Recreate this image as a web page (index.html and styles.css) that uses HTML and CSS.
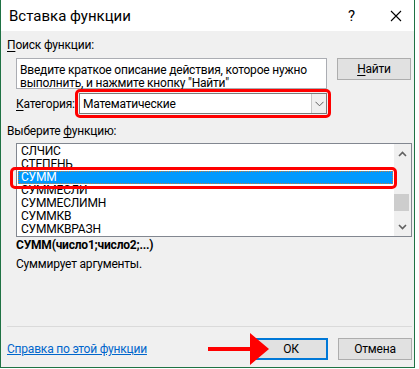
FILE: index.html
```html
<!DOCTYPE html>
<html lang="ru">
<head>
<meta charset="utf-8">
<title>Вставка функции</title>
<link rel="stylesheet" href="styles.css">
</head>
<body>
<div class="dialog">
  <div class="titlebar">
    <span class="title">Вставка функции</span>
    <span class="tb-help">?</span>
    <span class="tb-close">
      <svg width="12" height="12" viewBox="0 0 12 12"><path d="M1 1L11 11M11 1L1 11" stroke="#000" stroke-width="1.1" fill="none"/></svg>
    </span>
  </div>
  <div class="content">
    <div class="label"><u>П</u>оиск функции:</div>
    <div class="search-row">
      <div class="textarea">Введите краткое описание действия, которое нужно выполнить, и нажмите кнопку "Найти"</div>
      <div class="btn btn-find"><u>Н</u>айти</div>
    </div>
    <div class="cat-row">
      <span class="cat-label"><u>К</u>атегория:</span>
      <div class="red-box">
        <div class="select">
          <span class="select-text">Математические</span>
          <span class="select-arrow">
            <svg width="9" height="6" viewBox="0 0 9 6"><path d="M0.5 0.8L4.5 4.8L8.5 0.8" stroke="#606060" stroke-width="1" fill="none"/></svg>
          </span>
        </div>
      </div>
    </div>
    <div class="label label-list">Выберите <u>ф</u>ункцию:</div>
    <div class="listbox">
      <div class="items">
        <div class="item">СЛЧИС</div>
        <div class="item">СТЕПЕНЬ</div>
        <div class="item selected">СУММ</div>
        <div class="item">СУММЕСЛИ</div>
        <div class="item">СУММЕСЛИМН</div>
        <div class="item">СУММКВ</div>
        <div class="item">СУММКВРАЗН</div>
      </div>
      <div class="scrollbar">
        <svg class="sb-up" width="9" height="6" viewBox="0 0 9 6"><path d="M1 5L4.5 1.5L8 5" stroke="#606060" stroke-width="1.6" fill="none"/></svg>
        <div class="sb-track"><div class="sb-thumb"></div></div>
        <svg class="sb-down" width="9" height="6" viewBox="0 0 9 6"><path d="M1 1L4.5 4.5L8 1" stroke="#606060" stroke-width="1.6" fill="none"/></svg>
      </div>
      <div class="red-hl"></div>
    </div>
    <div class="signature">СУММ(число1;число2;...)</div>
    <div class="desc">Суммирует аргументы.</div>
    <div class="spacer"></div>
    <div class="separator"></div>
    <div class="footer">
      <a class="help-link" href="#">Справка по этой функции</a>
      <div class="buttons">
        <div class="btn btn-ok">ОК</div>
        <div class="btn btn-cancel">Отмена</div>
      </div>
      <svg class="arrow" width="62" height="32" viewBox="0 0 62 32"><path d="M0 14H42V0L61 16L42 32V18H0Z" fill="#ff0000"/></svg>
    </div>
  </div>
</div>
</body>
</html>
```
FILE: styles.css
```css
* { box-sizing: border-box; }
html, body { margin: 0; padding: 0; background: #ffffff; }
body {
  font-family: Roboto, "Noto Sans", sans-serif;
  font-size: 12px;
  letter-spacing: -0.2px;
  color: #000;
}
u { text-decoration: underline; text-underline-offset: 2px; }
.dialog {
  width: 415px;
  height: 368px;
  border-left: 1px solid #1f7244;
  border-right: 1px solid #1f7244;
  border-bottom: 1px solid #1f7244;
  display: flex;
  flex-direction: column;
  background: #f0f0f0;
}
.titlebar {
  height: 31px;
  background: #ffffff;
  display: flex;
  align-items: center;
  padding-left: 8px;
  flex: none;
}
.title { font-size: 15px; flex: 1; letter-spacing: 0; }
.tb-help { font-size: 15px; width: 42px; }
.tb-close { width: 24px; display: flex; }
.content {
  flex: 1;
  display: flex;
  flex-direction: column;
  padding: 6px 1px 0 6px;
}
.label { line-height: 16px; }
.search-row {
  display: flex;
  margin-top: 5px;
  margin-left: 9px;
  align-items: flex-start;
}
.textarea {
  width: 311px;
  height: 31px;
  background: #fff;
  border: 1px solid #abadb3;
  padding: 5px 3px 0;
  line-height: 12.5px;
}
.btn {
  background: #e1e1e1;
  border: 1px solid #adadad;
  display: flex;
  align-items: center;
  justify-content: center;
  height: 22px;
  width: 74px;
}
.btn-find { margin-left: 10px; }
.cat-row {
  display: flex;
  align-items: center;
  margin-left: 9px;
}
.cat-label { width: 59px; white-space: nowrap; }
.red-box {
  width: 256px;
  height: 29px;
  border: 3px solid #ff0000;
  border-radius: 5px;
  padding: 1px;
}
.select {
  height: 21px;
  background: #fff;
  border: 1px solid #7a7a7a;
  display: flex;
  align-items: center;
}
.select-text { flex: 1; padding-left: 3px; }
.select-arrow {
  width: 15px;
  height: 19px;
  border-left: 1px solid #c9c9c9;
  background: #f0f0f0;
  display: flex;
  align-items: center;
  justify-content: center;
}
.label-list { margin-top: 5px; }
.listbox {
  position: relative;
  margin-top: 4px;
  margin-left: 9px;
  width: 396px;
  height: 94px;
  border: 1px solid #828790;
  background: #fff;
  display: flex;
}
.items { flex: 1; padding-top: 1px; overflow: hidden; }
.item {
  height: 13px;
  line-height: 13px;
  padding-left: 3px;
  margin-left: 1px;
  margin-right: 1px;
}
.item.selected {
  background: #0099ff;
  color: #fff;
  outline: 1px dotted #c08040;
  outline-offset: -1px;
}
.scrollbar {
  width: 17px;
  background: #f0f0f0;
  display: flex;
  flex-direction: column;
  align-items: center;
}
.sb-up { margin-top: 7px; }
.sb-track { flex: 1; width: 100%; padding-top: 37px; }
.sb-thumb { width: 15px; height: 17px; background: #cdcdcd; }
.sb-down { margin-bottom: 6px; }
.red-hl {
  position: absolute;
  left: -7px;
  top: 23px;
  width: 387px;
  height: 22px;
  border: 3px solid #ff0000;
  border-radius: 5px;
}
.signature { font-weight: bold; line-height: 16px; margin-left: 9px; }
.desc { margin-top: 3px; line-height: 16px; margin-left: 9px; }
.spacer { flex: 1; }
.separator { height: 1px; background: #dadada; margin-right: 1px; }
.footer {
  position: relative;
  display: flex;
  align-items: flex-start;
  justify-content: space-between;
  height: 40px;
  padding-top: 11px;
}
.help-link { color: #0066cc; text-decoration: underline; line-height: 22px; }
.buttons { display: flex; gap: 10px; margin-right: 1px; }
.btn-ok { border: 2px solid #0078d7; }
.arrow { position: absolute; left: 201px; top: 6px; }
```
